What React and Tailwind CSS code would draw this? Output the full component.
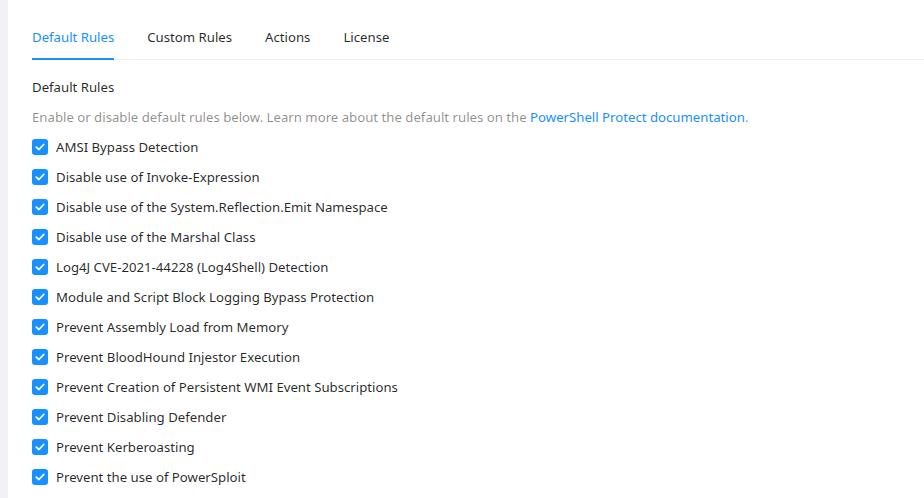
import React from "react";

const rules = [
  "AMSI Bypass Detection",
  "Disable use of Invoke-Expression",
  "Disable use of the System.Reflection.Emit Namespace",
  "Disable use of the Marshal Class",
  "Log4J CVE-2021-44228 (Log4Shell) Detection",
  "Module and Script Block Logging Bypass Protection",
  "Prevent Assembly Load from Memory",
  "Prevent BloodHound Injestor Execution",
  "Prevent Creation of Persistent WMI Event Subscriptions",
  "Prevent Disabling Defender",
  "Prevent Kerberoasting",
  "Prevent the use of PowerSploit",
];

const tabs = ["Default Rules", "Custom Rules", "Actions", "License"];

function Check() {
  return (
    <span className="flex h-4 w-4 shrink-0 items-center justify-center rounded-[3px] bg-[#1890ff]">
      <svg width="10" height="8" viewBox="0 0 10 8" fill="none">
        <path d="M1.3 4.1 L3.9 6.5 L8.7 1.5" stroke="white" strokeWidth="1.8" strokeLinecap="round" strokeLinejoin="round" />
      </svg>
    </span>
  );
}

export default function App() {
  return (
    <div
      className="flex h-[498px] w-[924px] overflow-hidden bg-white text-[13.2px] text-[rgba(0,0,0,0.85)]"
      style={{ fontFamily: '"Noto Sans", "Open Sans", sans-serif' }}
    >
      <div className="w-2 shrink-0 bg-[#f0f2f5]" />
      <div className="flex-1 pl-6 pt-[14px]">
        <div className="mb-4 flex border-b border-[#f0f0f0]">
          {tabs.map((t, i) => (
            <div
              key={t}
              className={
                "relative mr-[33px] pt-3 pb-[11px] leading-[22px] " +
                (i === 0 ? "text-[#1890ff]" : "text-[rgba(0,0,0,0.85)]")
              }
            >
              {t}
              {i === 0 && <div className="absolute bottom-[-1px] left-0 right-0 h-[2px] bg-[#1890ff]" />}
            </div>
          ))}
        </div>
        <div className="leading-[22px]">Default Rules</div>
        <div className="mt-2 leading-[22px] text-[rgba(0,0,0,0.45)]">
          Enable or disable default rules below. Learn more about the default rules on the{" "}
          <span className="text-[#1890ff]">PowerShell Protect documentation</span>.
        </div>
        <div className="mt-1 flex flex-col">
          {rules.map((r) => (
            <div key={r} className="flex h-[30px] items-center gap-2">
              <Check />
              <span className="leading-[22px]">{r}</span>
            </div>
          ))}
        </div>
      </div>
    </div>
  );
}
